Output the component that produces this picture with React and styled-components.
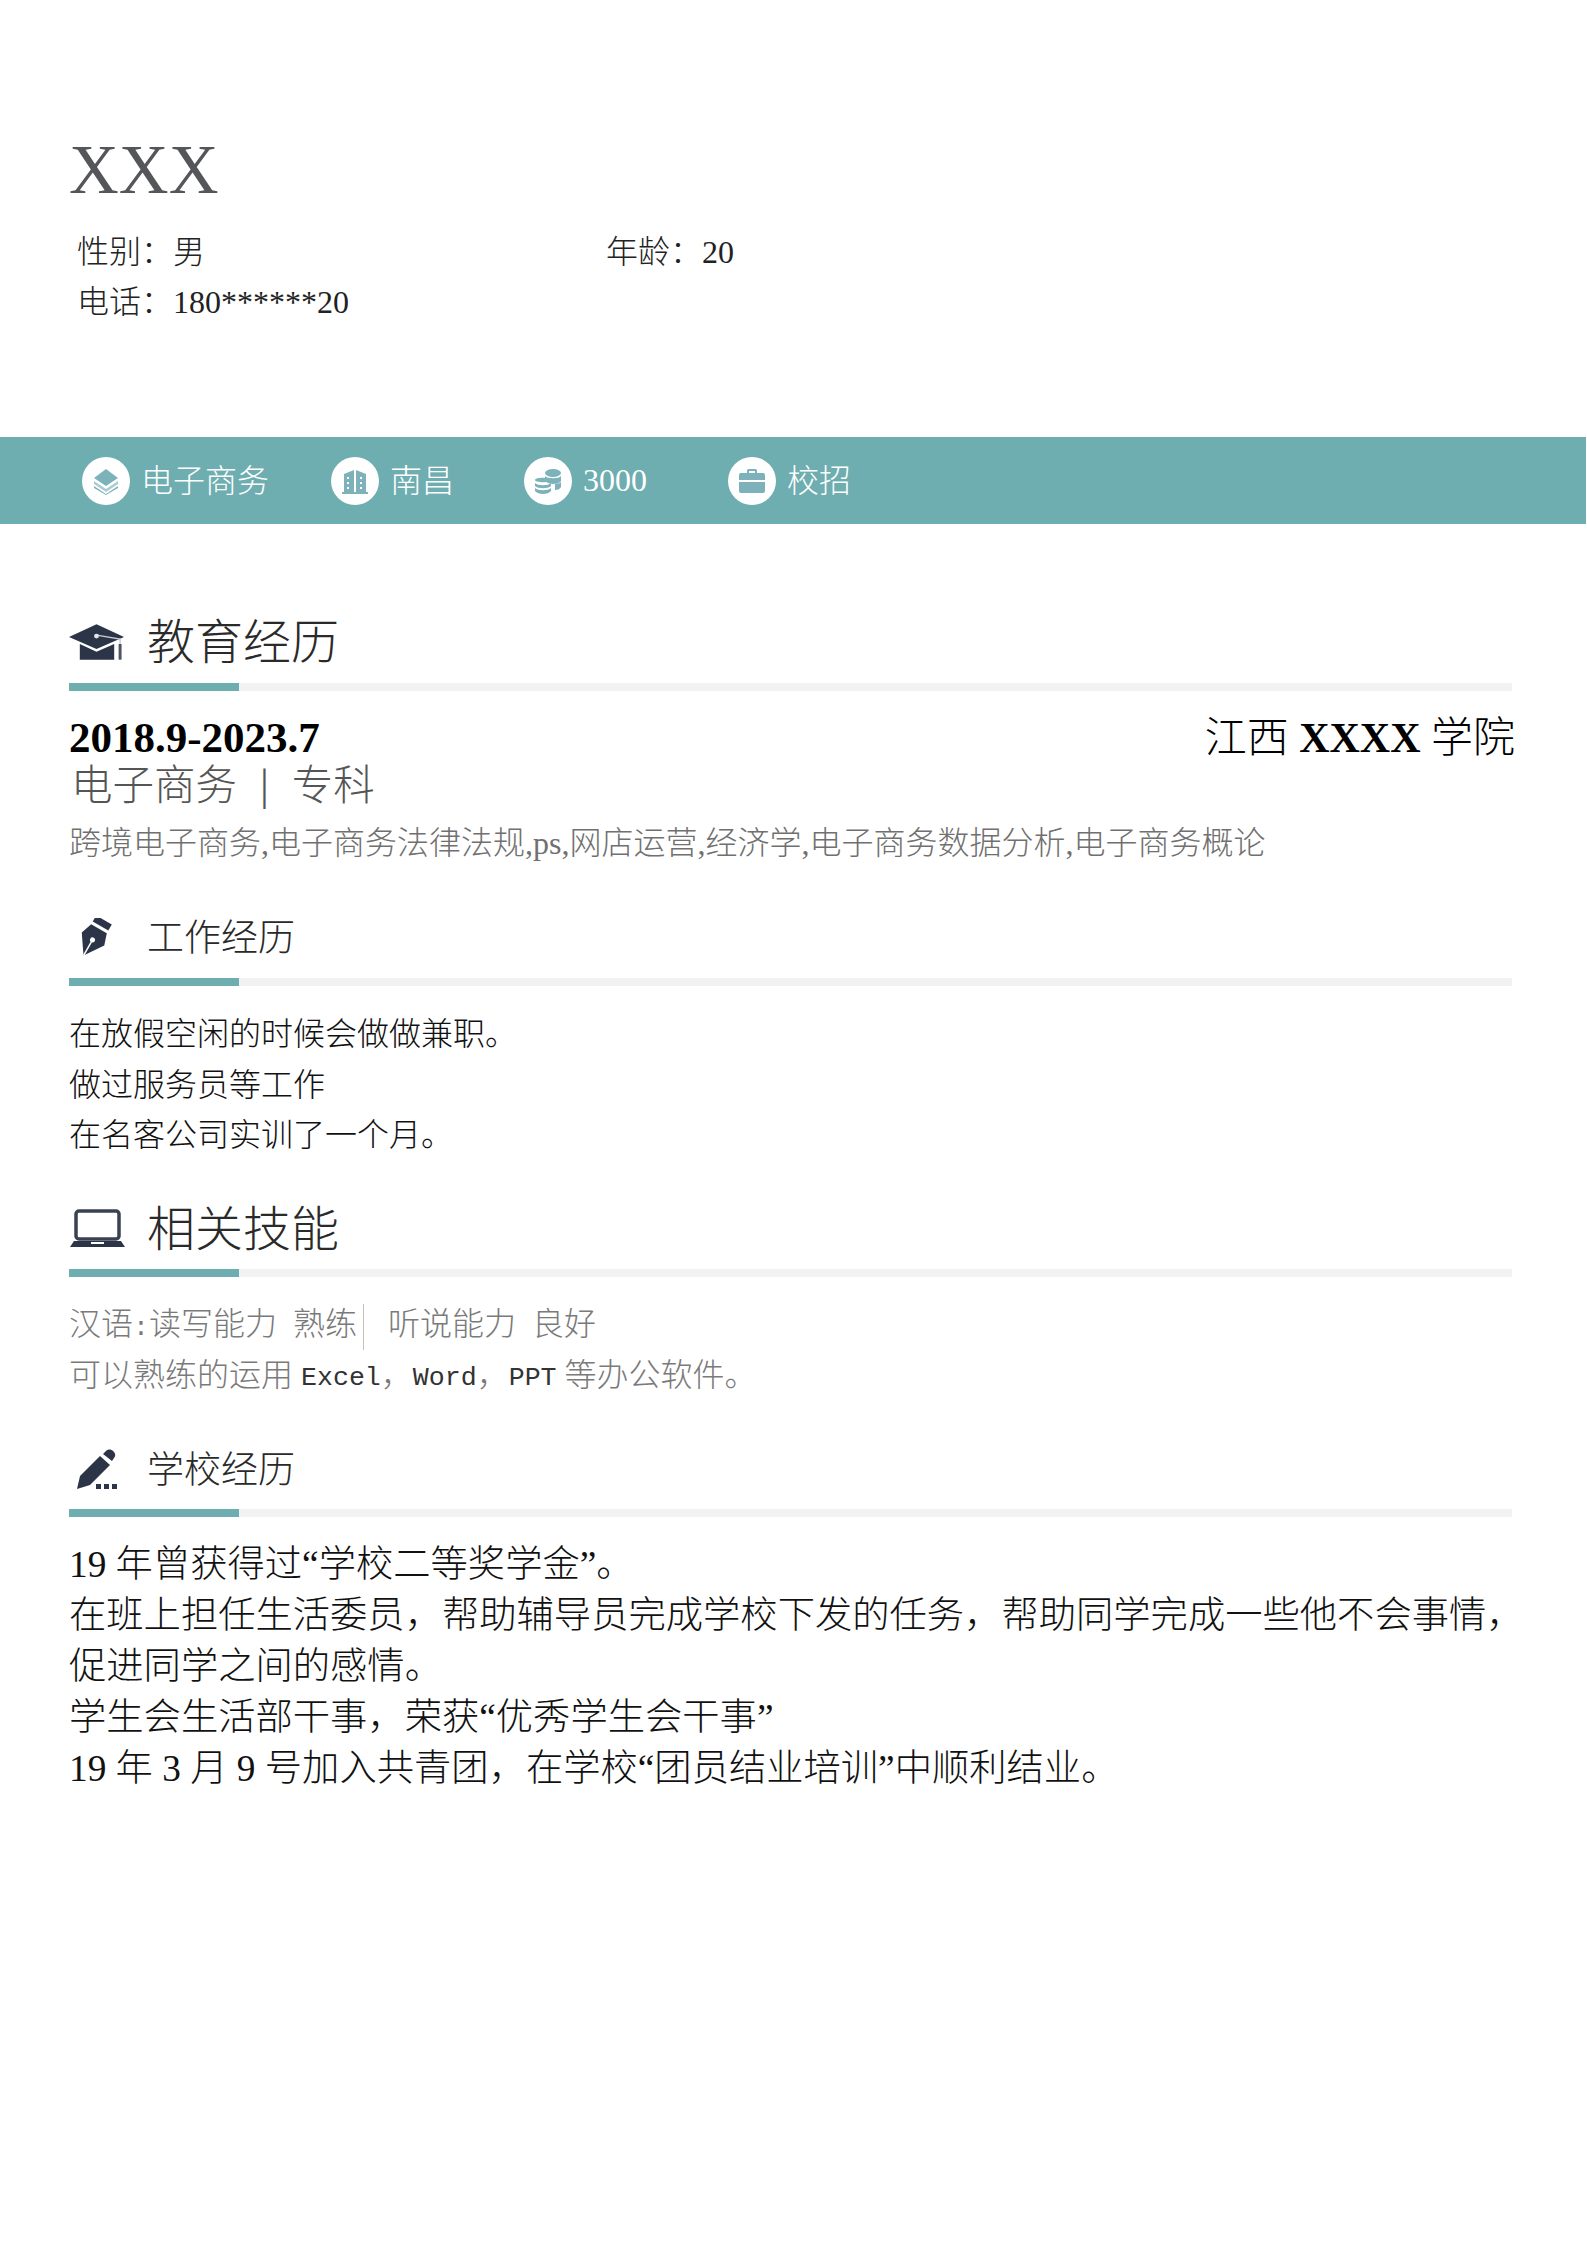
import React from 'react'
import styled, { createGlobalStyle } from 'styled-components'

const GlobalStyle = createGlobalStyle`
  html, body {
    margin: 0;
    padding: 0;
    background: #fff;
  }
  body {
    font-family: "Liberation Serif", "Noto Sans CJK SC", serif;
    font-weight: 300;
  }
`

const Page = styled.div`
  width: 1587px;
  height: 2245px;
  overflow: hidden;
`

const Header = styled.header`
  padding: 135px 0 110px 69px;
`

const Name = styled.div`
  font-size: 69px;
  line-height: 70px;
  font-weight: 400;
  color: #54565a;
`

const InfoGrid = styled.div`
  display: grid;
  grid-template-columns: 529px auto;
  justify-content: start;
  margin: 22px 0 0 8px;
  font-size: 32px;
  line-height: 50px;
  color: #222;
`

const Band = styled.div`
  display: flex;
  align-items: center;
  height: 87px;
  margin-right: 1px;
  padding-left: 82px;
  background: #6eadb0;
  color: #fff;
  font-size: 32px;
`

const BandItem = styled.div`
  display: flex;
  align-items: center;
  gap: 11px;
  width: ${({ $w }) => $w}px;
`

const BandCircle = styled.span`
  display: flex;
  align-items: center;
  justify-content: center;
  width: 48px;
  height: 48px;
  border-radius: 50%;
  background: #fff;
`

const BandLabel = styled.span`
  padding-bottom: ${({ $cjk }) => ($cjk ? 6 : 0)}px;
`

const Main = styled.main`
  padding: 0 75px 0 69px;
`

const Section = styled.section`
  margin-top: ${({ $top }) => $top}px;
`

const Head = styled.div`
  display: flex;
  align-items: center;
  height: 80px;
  margin-bottom: ${({ $gap }) => $gap || 0}px;
`

const IconSlot = styled.span`
  display: flex;
  align-items: center;
  justify-content: center;
  width: 56px;
  margin-right: 22px;
`

const Title = styled.h2`
  margin: 0;
  padding-bottom: ${({ $big }) => ($big ? 8 : 4)}px;
  font-size: ${({ $big }) => ($big ? 48 : 37)}px;
  font-weight: 300;
  color: #2a2a2a;
`

const Bar = styled.div`
  height: 8px;
  background: #f2f2f2;
`

const BarFill = styled.div`
  width: 170px;
  height: 100%;
  background: #6eadb0;
`

const Body = styled.div`
  margin: ${({ $top }) => $top}px ${({ $bleed }) => -($bleed || 0)}px 0 0;
  font-size: ${({ $size }) => $size || 32}px;
  color: ${({ $color }) => $color || '#111'};
`

const Line = styled.div`
  height: ${({ $lh }) => $lh || 50.6}px;
  line-height: ${({ $lh }) => $lh || 50.6}px;
`

const Para = styled.div`
  line-height: 51px;
`

const DateRow = styled.div`
  display: flex;
  justify-content: space-between;
  margin: 22px -3px 0 0;
  height: 50px;
  font-size: 43px;
  line-height: 50px;
  color: #000;
`

const School = styled.span`
  font-size: 42px;
`

const Strong = styled.b`
  font-weight: 700;
`

const Major = styled.div`
  height: 43px;
  padding: 1px 0 0 2px;
  font-size: 41.500px;
  line-height: 44px;
  color: #555;
`

const Pipe = styled.span`
  margin: 0 23px;
  font-size: 44px;
`

const Courses = styled.div`
  margin-top: 11px;
  font-size: 32px;
  line-height: 50px;
  color: #707070;
`

const Mono = styled.span`
  font-family: "Liberation Mono", monospace;
  font-size: 26.600px;
  white-space: pre;
  vertical-align: ${({ $dark }) => ($dark ? '1px' : 'baseline')};
  color: ${({ $dark }) => ($dark ? '#333' : 'inherit')};
`

const Divider = styled.span`
  display: inline-block;
  width: 1px;
  height: 46px;
  margin: 0 24px 0 6px;
  vertical-align: middle;
  background: #cdbfae;
`

const dark = '#2c3547'
const soft = '#7db2bb'

const LayersIcon = () => (
  <svg width="28" height="28" viewBox="0 0 28 28">
    <path d="M14 2 26 11 14 19 2 11Z" fill={soft} />
    <path d="M2 14 14 22 26 14V17L14 25 2 17Z" fill="#a9ccd4" />
    <path d="M2 19 14 27 26 19V21L14 28 2 21Z" fill={soft} />
  </svg>
)

const BuildingIcon = () => (
  <svg width="28" height="28" viewBox="0 0 28 28">
    <path d="M3 25V7L13 3V25ZM15 3 25 7V25H15ZM1 25H27V27H1Z" fill={soft} />
    <path d="M6 10h2v2H6ZM6 15h2v2H6ZM6 20h2v2H6ZM19 10h2v2h-2ZM19 15h2v2h-2ZM19 20h2v2h-2Z" fill="#fff" />
  </svg>
)

const CoinsIcon = () => (
  <svg width="28" height="28" viewBox="0 0 28 28">
    <ellipse cx="19" cy="6" rx="8" ry="4" fill={soft} />
    <path d="M11 9c2 3 14 3 16 0v5c-1 2-4 3-8 3-3 0-6-1-8-3ZM27 15v5c-1 2-3 3-6 3v-6c3 0 5-1 6-2Z" fill={soft} />
    <path d="M1 13c0-3 16-3 16 0s-16 3-16 0ZM1 16c3 3 13 3 16 0v3c-3 3-13 3-16 0ZM1 21c3 3 13 3 16 0v3c-3 4-13 4-16 0Z" fill={soft} />
  </svg>
)

const CaseIcon = () => (
  <svg width="28" height="28" viewBox="0 0 28 28">
    <path d="M9 6V3.500C9 2.700 9.700 2 10.500 2h7C18.300 2 19 2.700 19 3.500V6h-2V4h-6v2Z" fill={soft} />
    <path d="M3 6H25C26.100 6 27 6.900 27 8V13H1V8C1 6.900 1.900 6 3 6ZM1 15H27V24C27 25.100 26.100 26 25 26H3C1.900 26 1 25.100 1 24Z" fill={soft} />
  </svg>
)

const CapIcon = () => (
  <svg width="57" height="36" viewBox="0 0 57 36">
    <path d="M28 0 56 13 28 25 0 13Z" fill={dark} />
    <path d="M11 20 28 28 46 20V36H11Z" fill={dark} />
    <path d="M28 11 52 15V22" stroke="#c9cdd4" strokeWidth="1.500" fill="none" />
    <circle cx="28" cy="12" r="2.500" fill="#e4e6ea" />
    <path d="M52 20V36" stroke="#4c5362" strokeWidth="3" />
  </svg>
)

const PenIcon = () => (
  <svg width="37" height="38" viewBox="0 0 37 38">
    <g transform="translate(25 2) rotate(30)">
      <rect x="-9" y="0" width="18" height="7" fill={dark} />
      <path d="M-9 10H9L13 22 0 41-13 22Z" fill={dark} />
      <path d="M0 41V25" stroke="#fff" strokeWidth="1.500" />
      <circle cx="0" cy="23" r="2.500" fill="#fff" />
    </g>
  </svg>
)

const LaptopIcon = () => (
  <svg width="55" height="39" viewBox="0 0 55 39">
    <rect x="6" y="2" width="43" height="28" rx="3" fill="none" stroke="#3a4152" strokeWidth="3.500" />
    <path d="M4 32H51L55 38H0Z" fill={dark} />
    <rect x="21" y="33" width="13" height="2" fill="#fff" />
  </svg>
)

const PencilIcon = () => (
  <svg width="41" height="40" viewBox="0 0 41 40">
    <path d="M0 40 3 27 23 7 33 16 13 36Z" fill={dark} />
    <path d="M26 5 29 2C31 0 34 0 36 2 38.500 4 39 7 37 9L35 12Z" fill={dark} />
    <rect x="19" y="35" width="5" height="5" fill={dark} />
    <rect x="27" y="35" width="5" height="5" fill={dark} />
    <rect x="35" y="35" width="5" height="5" fill={dark} />
  </svg>
)

const bandItems = [
  { label: '电子商务', icon: <LayersIcon />, w: 249, cjk: true },
  { label: '南昌', icon: <BuildingIcon />, w: 193, cjk: true },
  { label: '3000', icon: <CoinsIcon />, w: 204 },
  { label: '校招', icon: <CaseIcon />, w: 130, cjk: true },
]

const SectionHead = ({ icon, title, big, gap }) => (
  <>
    <Head $gap={gap}>
      <IconSlot>{icon}</IconSlot>
      <Title $big={big}>{title}</Title>
    </Head>
    <Bar><BarFill /></Bar>
  </>
)

export default function App() {
  return (
    <Page>
      <GlobalStyle />
      <Header>
        <Name>XXX</Name>
        <InfoGrid>
          <span>性别：男</span>
          <span>年龄：20</span>
          <span>电话：180******20</span>
        </InfoGrid>
      </Header>

      <Band>
        {bandItems.map((item) => (
          <BandItem key={item.label} $w={item.w}>
            <BandCircle>{item.icon}</BandCircle>
            <BandLabel $cjk={item.cjk}>{item.label}</BandLabel>
          </BandItem>
        ))}
      </Band>

      <Main>
        <Section $top={78}>
          <SectionHead icon={<CapIcon />} title="教育经历" big gap={1} />
          <DateRow>
            <Strong>2018.9-2023.7</Strong>
            <School>江西 <Strong>XXXX</Strong> 学院</School>
          </DateRow>
          <Major>电子商务<Pipe>|</Pipe>专科</Major>
          <Courses>跨境电子商务,电子商务法律法规,ps,网店运营,经济学,电子商务数据分析,电子商务概论</Courses>
        </Section>

        <Section $top={29}>
          <SectionHead icon={<PenIcon />} title="工作经历" gap={1} />
          <Body $top={23}>
            <Line>在放假空闲的时候会做做兼职。</Line>
            <Line>做过服务员等工作</Line>
            <Line>在名客公司实训了一个月。</Line>
          </Body>
        </Section>

        <Section $top={28}>
          <SectionHead icon={<LaptopIcon />} title="相关技能" big />
          <Body $top={22} $color="#7a7a7a">
            <Line $lh={51}>
              汉语<Mono>:</Mono>读写能力<Mono> </Mono>熟练<Divider />听说能力<Mono> </Mono>良好
            </Line>
            <Line $lh={51}>
              可以熟练的运用 <Mono $dark>Excel</Mono>，<Mono $dark>Word</Mono>，<Mono $dark>PPT</Mono> 等办公软件。
            </Line>
          </Body>
        </Section>

        <Section $top={28}>
          <SectionHead icon={<PencilIcon />} title="学校经历" />
          <Body $top={22} $size={37.300} $bleed={15}>
            <Para>19 年曾获得过“学校二等奖学金”。</Para>
            <Para>在班上担任生活委员，帮助辅导员完成学校下发的任务，帮助同学完成一些他不会事情，促进同学之间的感情。</Para>
            <Para>学生会生活部干事，荣获“优秀学生会干事”</Para>
            <Para>19 年 3 月 9 号加入共青团，在学校“团员结业培训”中顺利结业。</Para>
          </Body>
        </Section>
      </Main>
    </Page>
  )
}
